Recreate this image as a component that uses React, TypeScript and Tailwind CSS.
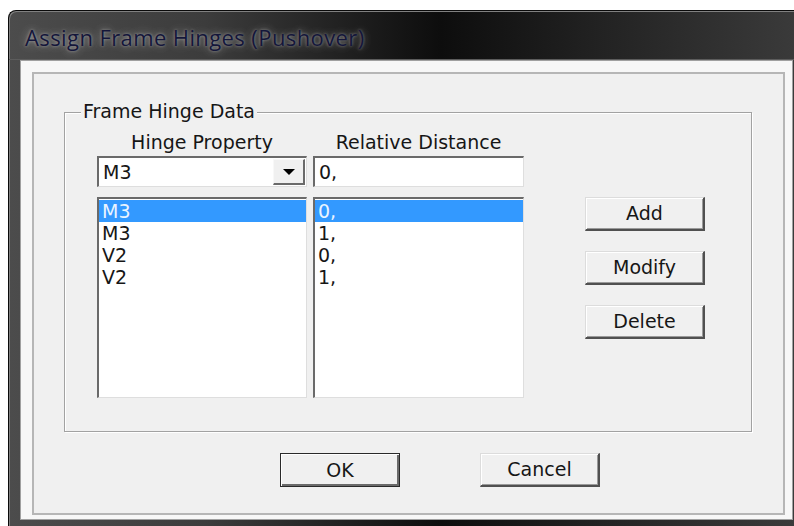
const hinges = [
  { prop: "M3", dist: "0," },
  { prop: "M3", dist: "1," },
  { prop: "V2", dist: "0," },
  { prop: "V2", dist: "1," },
];

const ui = "font-['DejaVu_Sans',sans-serif] text-[19px] text-[#161616]";

function PushButton({ label, isDefault }: { label: string; isDefault?: boolean }) {
  return (
    <button
      className={
        "w-[120px] h-[34px] bg-[#f0f0f0] flex items-center justify-center leading-none " +
        (isDefault
          ? "border border-[#2a2a2a] shadow-[inset_1px_1px_0_#ffffff,inset_-2px_-2px_0_#6a6a6a]"
          : "border-t border-l border-t-[#dcdcdc] border-l-[#dcdcdc] border-r-2 border-b-2 border-r-[#505050] border-b-[#505050] shadow-[inset_1px_1px_0_#ffffff,inset_-1px_-1px_0_#9a9a9a]")
      }
    >
      {label}
    </button>
  );
}

function ListBox({ items }: { items: string[] }) {
  return (
    <div className="h-[201px] bg-white border-t-2 border-l-2 border-t-[#6a6a6a] border-l-[#6a6a6a] border-r border-b border-r-[#dedede] border-b-[#dedede] pt-[1px]">
      {items.map((item, i) => (
        <div
          key={i}
          className={
            "h-[22px] leading-[22px] pl-[3px] " +
            (i === 0 ? "bg-[#3399ff] text-[#eaf4ff]" : "")
          }
        >
          {item}
        </div>
      ))}
    </div>
  );
}

export default function App() {
  return (
    <div className="w-[794px] h-[526px] overflow-hidden bg-white pt-[10px] pl-[8px]">
      <div className="w-[786px] h-[516px] flex flex-col rounded-tl-[8px] border-t border-l border-[#0a0a0a] bg-[linear-gradient(90deg,#4c4c4c_0%,#3c3c3c_25%,#0d0d0d_55%,#222222_75%,#3a3a3a_100%)] shadow-[inset_1px_1px_0_#808080]">
        {/* title bar */}
        <div className="h-[49px] shrink-0 flex items-center pl-[16px] pt-[4px] border-b border-[#5c5c5c]">
          <span className="font-['Open_Sans',sans-serif] text-[22px] tracking-[0.4px] text-[#14163a] [text-shadow:0_0_3px_rgba(255,255,255,0.45),0_0_8px_rgba(255,255,255,0.35),0_0_16px_rgba(255,255,255,0.2)]">
            Assign Frame Hinges (Pushover)
          </span>
        </div>

        {/* client area */}
        <div className="flex-1 pl-[11px] pr-[1px] pb-[6px]">
          <div className="h-full bg-[#f7f7f7] border border-[#a0a0a0] pt-[11px] pl-[11px] pr-[7px] pb-[4px]">
            <div className={"h-full bg-[#f0f0f0] border-2 border-[#b6b6b6] flex flex-col " + ui}>
              {/* Frame Hinge Data group */}
              <div className="relative ml-[30px] mt-[38px] w-[688px] h-[320px] border border-[#a2a2a2] shadow-[inset_1px_1px_0_#ffffff,1px_1px_0_#ffffff]">
                <span className="absolute -top-[13px] left-[16px] px-[2px] bg-[#f0f0f0] leading-[22px]">
                  Frame Hinge Data
                </span>
                <div className="flex pl-[32px] pt-[18px]">
                  <div className="w-[210px]">
                    <div className="h-[22px] leading-[22px] text-center">Hinge Property</div>
                    <div className="mt-[3px] h-[31px] bg-white flex items-center justify-between border-t-2 border-l-2 border-t-[#6a6a6a] border-l-[#6a6a6a] border-r border-b border-r-[#dedede] border-b-[#dedede]">
                      <span className="pl-[4px]">M3</span>
                      <div className="w-[32px] h-[26px] mr-[1px] bg-[#f0f0f0] flex items-center justify-center border-t border-l border-[#f8f8f8] border-r-2 border-b-2 border-r-[#6a6a6a] border-b-[#6a6a6a]">
                        <div className="w-0 h-0 border-l-[6px] border-r-[6px] border-t-[6px] border-l-transparent border-r-transparent border-t-black" />
                      </div>
                    </div>
                    <div className="mt-[10px]">
                      <ListBox items={hinges.map((h) => h.prop)} />
                    </div>
                  </div>

                  <div className="w-[211px] ml-[6px]">
                    <div className="h-[22px] leading-[22px] text-center">Relative Distance</div>
                    <div className="mt-[3px] h-[31px] bg-white flex items-center pl-[4px] border-t-2 border-l-2 border-t-[#6a6a6a] border-l-[#6a6a6a] border-r border-b border-r-[#dedede] border-b-[#dedede]">
                      0,
                    </div>
                    <div className="mt-[10px]">
                      <ListBox items={hinges.map((h) => h.dist)} />
                    </div>
                  </div>

                  <div className="ml-[61px] mt-[66px] flex flex-col gap-[20px]">
                    <PushButton label="Add" />
                    <PushButton label="Modify" />
                    <PushButton label="Delete" />
                  </div>
                </div>
              </div>

              <div className="flex ml-[246px] mt-[21px] gap-[80px]">
                <PushButton label="OK" isDefault />
                <PushButton label="Cancel" />
              </div>
            </div>
          </div>
        </div>
      </div>
    </div>
  );
}
